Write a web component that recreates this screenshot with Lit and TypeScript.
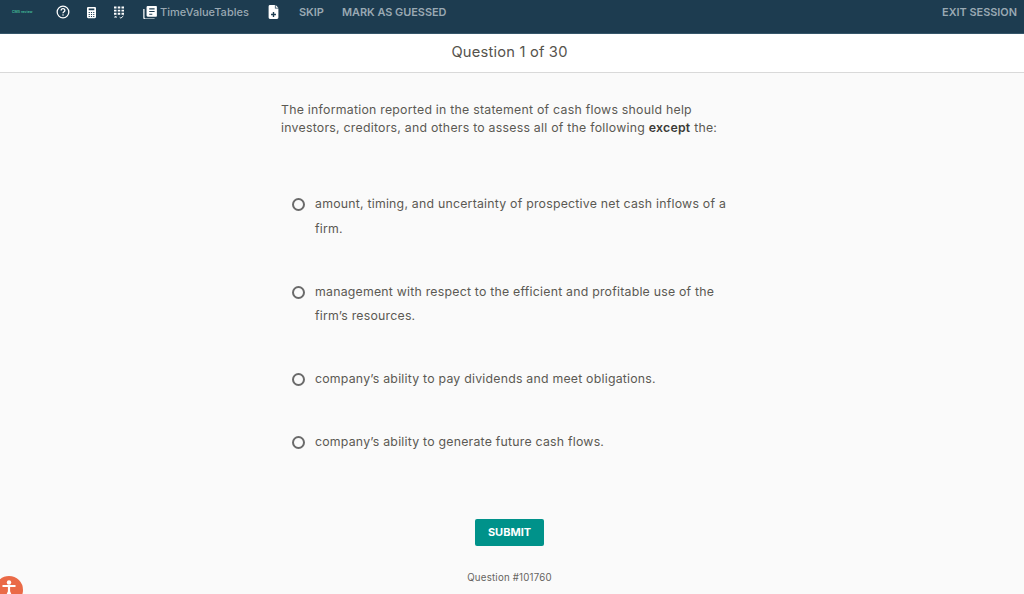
import { LitElement, html, css, svg } from "lit";
import { customElement } from "lit/decorators.js";

const OPTIONS = [
  "amount, timing, and uncertainty of prospective net cash inflows of a firm.",
  "management with respect to the efficient and profitable use of the firm’s resources.",
  "company’s ability to pay dividends and meet obligations.",
  "company’s ability to generate future cash flows.",
];

const helpIcon = svg`<circle cx="12" cy="12" r="10" fill="none" stroke="#fff" stroke-width="2.200"/><path d="M8.800 9.400a3.200 3.200 0 0 1 6.400 0c0 2.200-3.200 2.400-3.200 4.800" fill="none" stroke="#fff" stroke-width="2.200"/><rect x="10.900" y="16" width="2.200" height="2.200" fill="#fff"/>`;
const calcIcon = svg`<path fill="#fff" fill-rule="evenodd" d="M2 0h12a2 2 0 0 1 2 2v16a2 2 0 0 1-2 2H2a2 2 0 0 1-2-2V2a2 2 0 0 1 2-2zm1 3v3h10V3zm0 6v2h2V9zm4 0v2h2V9zm4 0v2h2V9zm-8 3.500v2h2v-2zm4 0v2h2v-2zm4 0v2h2v-2zM3 16v2h2v-2zm4 0v2h2v-2zm4 0v2h2v-2z"/>`;
const gridIcon = svg`<path fill="#fff" d="M0 0h4v3H0zM6 0h4v3H6zM12 0h4v3h-4zM0 5h4v3H0zM6 5h4v3H6zM12 5h4v3h-4zM0 10h4v3H0zM6 10h4v3H6zM12 10h4v3h-4z"/><path d="M1 15l3 3M4 15l-3 3M9 17l2 1.500 4-3.500" stroke="#fff" stroke-width="1.500" fill="none"/>`;
const tablesIcon = svg`<path fill="none" stroke="#fff" stroke-width="1.600" d="M1 4v11a2 2 0 0 0 2 2h12"/><path fill="#fff" fill-rule="evenodd" d="M6 0h11a1 1 0 0 1 1 1v12a1 1 0 0 1-1 1H6a1.500 1.500 0 0 1-1.500-1.500V1.500A1.500 1.500 0 0 1 6 0zm2 3v1.500h7V3zm0 3.500V8h7V6.500zM8 10v1.500h4V10z"/>`;
const noteIcon = svg`<path fill="#fff" fill-rule="evenodd" d="M2 0h7v5h5v13a2 2 0 0 1-2 2H2a2 2 0 0 1-2-2V2a2 2 0 0 1 2-2zm4 10v2.500H3.500v2H6V17h2v-2.500h2.500v-2H8V10z"/><path fill="#fff" d="M10 0l4 4h-4z"/>`;

@customElement("app-root")
export class AppRoot extends LitElement {
  static styles = css`
    :host {
      display: block;
      height: 594px;
      overflow: hidden;
      position: relative;
      font-family: "Inter", "Noto Sans", sans-serif;
      background: #fafafa;
      color: #5b5953;
    }

    .topbar {
      height: 24px;
      background: #1d3c50;
      border-bottom: 1px solid #35566a;
      display: flex;
      align-items: center;
      padding: 0 7px 9px 12px;
    }

    .logo {
      font-size: 3.500px;
      width: 22px;
      color: #3fae8f;
      font-weight: 700;
      white-space: nowrap;
    }

    .topbar svg { display: block; flex: none; }
    .help { margin-left: 22px; }
    .calc { margin-left: 17px; }
    .grid { margin-left: 18px; }
    .tables { margin-left: 19px; }
    .note { margin-left: 19px; }

    .nav-label {
      color: #9aa9b3;
      font-size: 11px;
      font-weight: 600;
      white-space: nowrap;
    }
    .tables-label { margin-left: 3px; font-size: 11px; font-weight: 500; letter-spacing: 0.02px; }
    .skip { margin-left: 20px; }
    .guessed { margin-left: 18px; font-size: 10.900px; }
    .exit { margin-left: auto; font-size: 10.900px; }

    .subhead {
      height: 36px;
      padding: 0 5px 2px 0;
      background: #fff;
      border-bottom: 1px solid #d9d9d9;
      display: flex;
      align-items: center;
      justify-content: center;
      font-size: 14.700px;
      color: #56534d;
      letter-spacing: 0.2px;
    }

    .content {
      width: 462px;
      margin-left: 281px;
      padding-top: 28px;
    }

    .stem {
      margin: 0;
      font-size: 12.300px;
      line-height: 18px;
      letter-spacing: 0.25px;
      width: 440px;
    }
    .stem b { font-weight: 600; color: #3b3a36; }

    .options {
      list-style: none;
      margin: 55px 0 0;
      padding: 0;
      display: flex;
      flex-direction: column;
      gap: 38.500px;
    }

    .option {
      display: flex;
      gap: 10px;
      padding-left: 11px;
      font-size: 12.300px;
      line-height: 24.500px;
      letter-spacing: 0.23px;
    }

    .radio {
      flex: none;
      box-sizing: border-box;
      width: 13px;
      height: 13px;
      margin-top: 6px;
      border: 2px solid #6a6a6a;
      border-radius: 50%;
    }

    .actions {
      display: flex;
      justify-content: center;
      margin-top: 64px;
      padding-right: 5px;
    }

    .submit {
      width: 69px;
      height: 27px;
      border: none;
      border-radius: 2px;
      padding: 0;
      background: #00928a;
      color: #fff;
      font: 700 11px "Inter", sans-serif;
    }

    .ref {
      text-align: center;
      margin-top: 26px;
      padding-right: 5px;
      font-size: 9.700px;
      letter-spacing: 0.2px;
      color: #66645f;
    }

    .a11y {
      position: absolute;
      left: -5px;
      top: 576px;
      width: 28px;
      height: 28px;
      border-radius: 50%;
      background: #ea6a47;
    }
    .a11y svg { display: block; }
  `;

  render() {
    return html`
      <div class="topbar">
        <span class="logo">CMS review</span>
        <svg class="help" width="14" height="14" viewBox="0 0 24 24">${helpIcon}</svg>
        <svg class="calc" width="9" height="13" viewBox="0 0 16 20">${calcIcon}</svg>
        <svg class="grid" width="10" height="13" viewBox="0 0 16 19">${gridIcon}</svg>
        <svg class="tables" width="14" height="13" viewBox="0 0 18 17">${tablesIcon}</svg>
        <span class="nav-label tables-label">TimeValueTables</span>
        <svg class="note" width="11" height="14" viewBox="0 0 14 20">${noteIcon}</svg>
        <span class="nav-label skip">SKIP</span>
        <span class="nav-label guessed">MARK AS GUESSED</span>
        <span class="nav-label exit">EXIT SESSION</span>
      </div>
      <div class="subhead">Question 1 of 30</div>
      <div class="content">
        <p class="stem">
          The information reported in the statement of cash flows should help investors, creditors,
          and others to assess all of the following <b>except</b> the:
        </p>
        <ul class="options">
          ${OPTIONS.map((o) => html`<li class="option"><span class="radio"></span><span>${o}</span></li>`)}
        </ul>
      </div>
      <div class="actions"><button class="submit">SUBMIT</button></div>
      <div class="ref">Question #101760</div>
      <div class="a11y">
        <svg width="28" height="28" viewBox="0 0 28 28">
          <circle cx="14" cy="6.500" r="2.200" fill="#fff"/>
          <path d="M7.500 10h13M14 10v6M14 15.500l-3.500 8M14 15.500l3.500 8" stroke="#fff" stroke-width="2.200" fill="none"/>
        </svg>
      </div>
    `;
  }
}
